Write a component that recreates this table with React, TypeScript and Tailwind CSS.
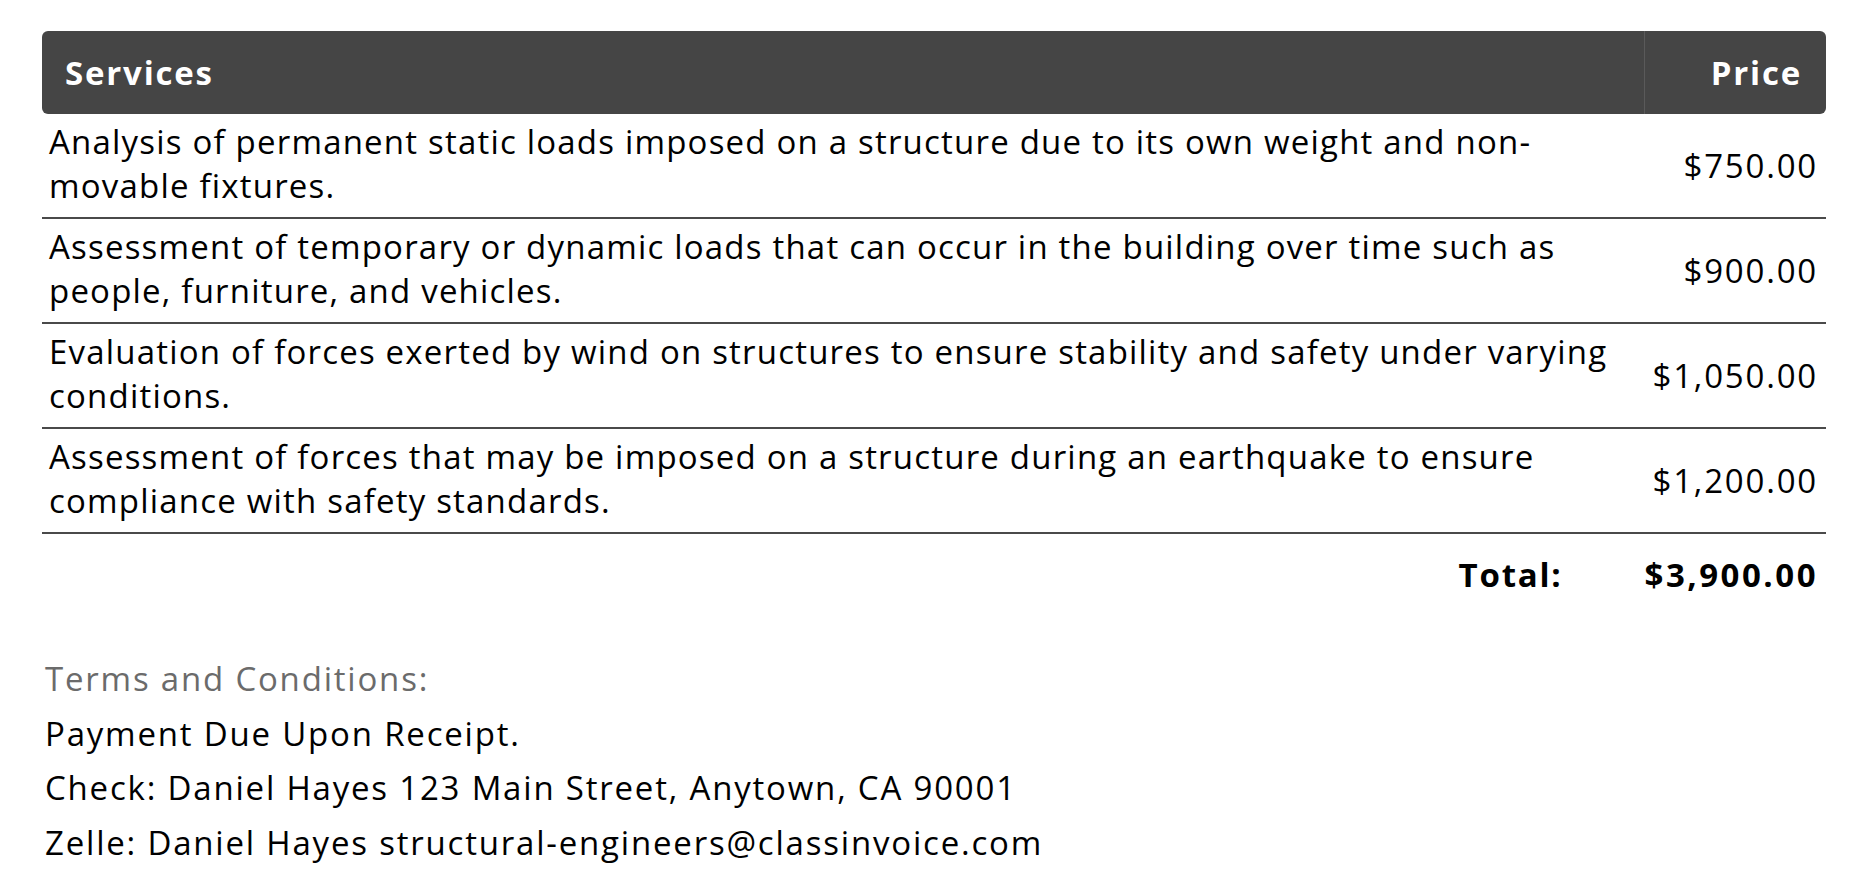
const services = [
  {
    description:
      'Analysis of permanent static loads imposed on a structure due to its own weight and non-movable fixtures.',
    price: '$750.00',
  },
  {
    description:
      'Assessment of temporary or dynamic loads that can occur in the building over time such as people, furniture, and vehicles.',
    price: '$900.00',
  },
  {
    description:
      'Evaluation of forces exerted by wind on structures to ensure stability and safety under varying conditions.',
    price: '$1,050.00',
  },
  {
    description:
      'Assessment of forces that may be imposed on a structure during an earthquake to ensure compliance with safety standards.',
    price: '$1,200.00',
  },
];

export default function App() {
  return (
    <div className="min-h-screen bg-white px-[42px] pt-[31px] text-black tracking-[1.8px] font-['Open_Sans',_'Noto_Sans',_sans-serif]">
      {/* Services table */}
      <table className="w-full border-collapse text-[33px] leading-[44px]">
        <thead>
          <tr className="text-white">
            <th className="bg-[#454545] rounded-l-[6px] h-[83px] pl-[23px] text-left font-bold">
              Services
            </th>
            <th className="bg-[#454545] rounded-r-[6px] h-[83px] w-[180px] pr-[24px] text-right font-bold border-l border-[#5a5a5a]">
              Price
            </th>
          </tr>
        </thead>
        <tbody>
          {services.map((s) => (
            <tr key={s.price} className="border-b-2 border-[#4a4a4a]">
              <td className="pl-[7px] pr-[6px] pt-[6px] pb-[9px] align-middle tracking-[1.2px]">
                {s.description}
              </td>
              <td className="pr-[8px] text-right align-middle whitespace-nowrap">{s.price}</td>
            </tr>
          ))}
          <tr className="font-bold">
            <td className="pr-[82px] pt-[19px] text-right">Total:</td>
            <td className="pr-[8px] pt-[19px] text-right whitespace-nowrap tracking-[2.5px]">$3,900.00</td>
          </tr>
        </tbody>
      </table>

      {/* Terms */}
      <div className="mt-[55px] pl-[3px] text-[33px] leading-[54.5px]">
        <p className="text-[#6b6b6b]">Terms and Conditions:</p>
        <p>Payment Due Upon Receipt.</p>
        <p>Check: Daniel Hayes 123 Main Street, Anytown, CA 90001</p>
        <p>Zelle: Daniel Hayes structural-engineers@classinvoice.com</p>
      </div>
    </div>
  );
}
